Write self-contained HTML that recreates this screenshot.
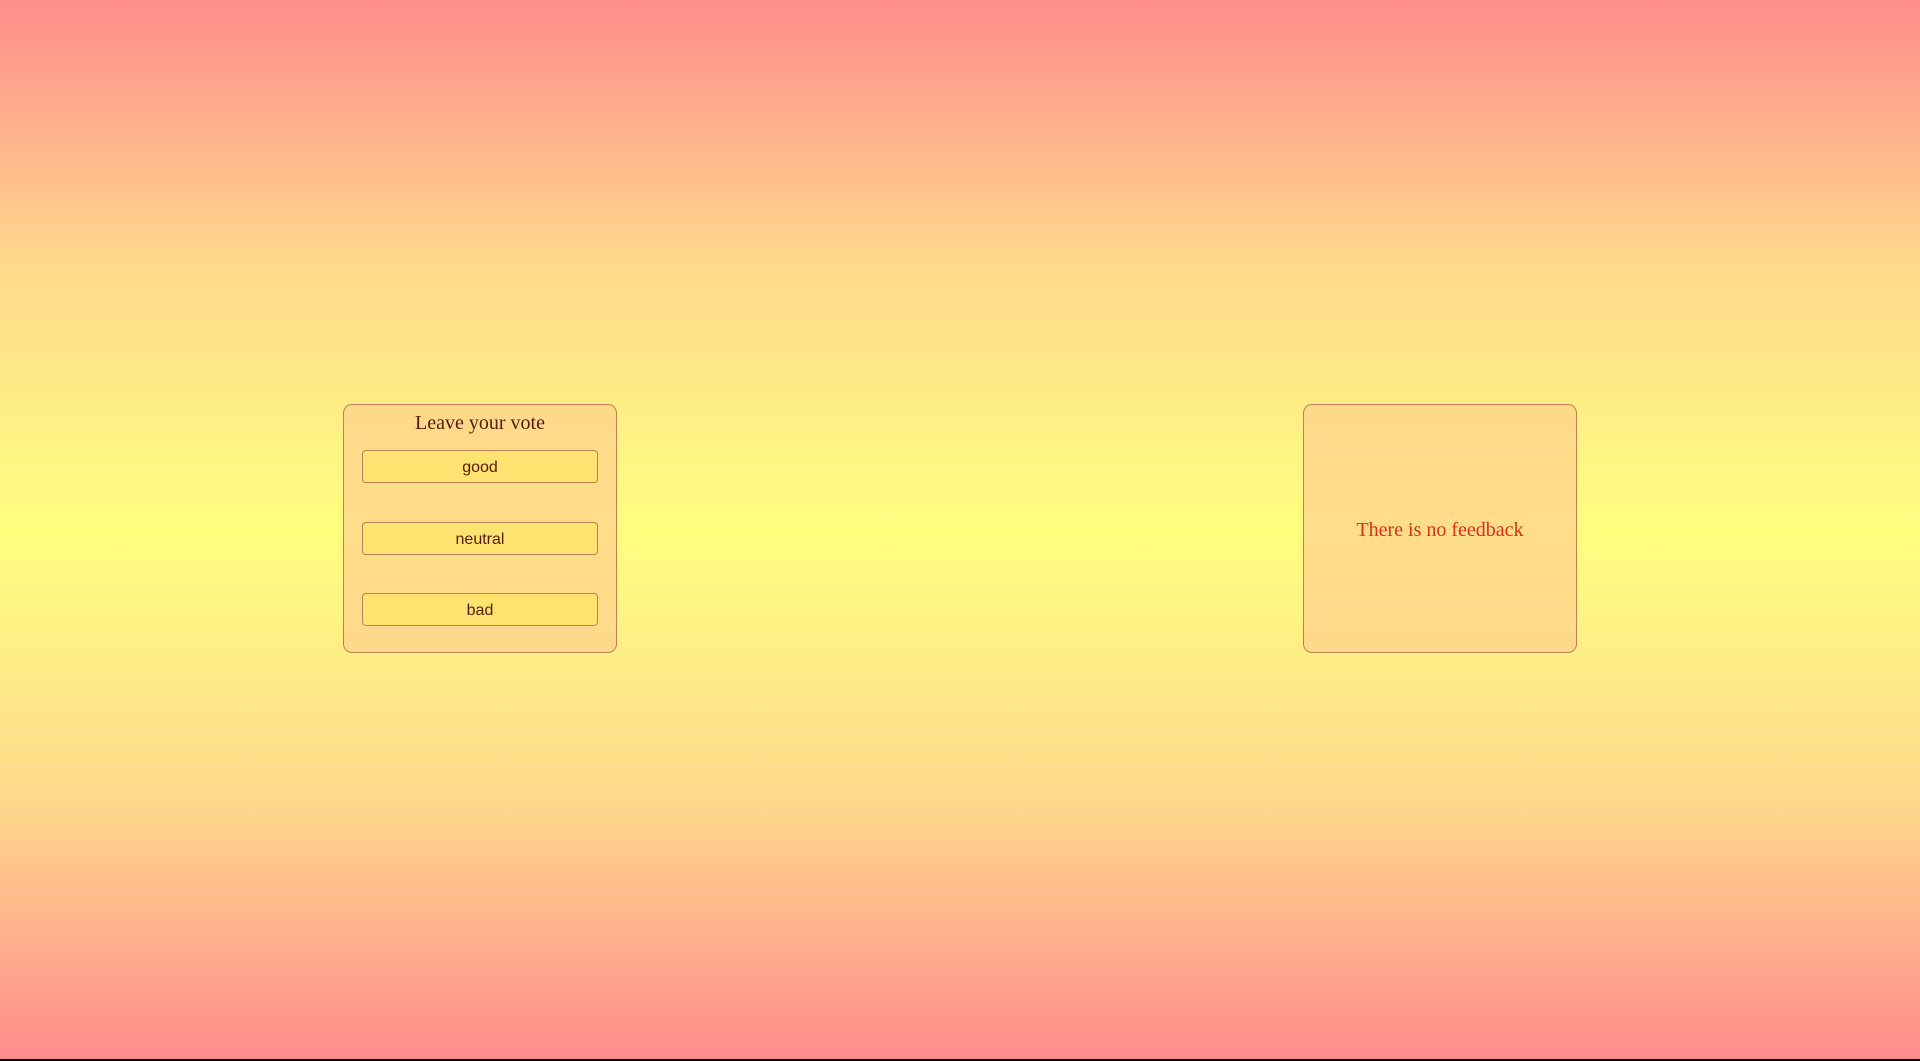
<!DOCTYPE html>
<html><head><meta charset="utf-8"><style>
html,body{margin:0;padding:0;width:1920px;height:1061px;overflow:hidden}
body{background:linear-gradient(to bottom,#ff8c8c 0%,#ffd98c 25%,#ffff80 50%,#ffd98c 75%,#ff8c8c 99.8%,#000 99.8%);position:relative;font-family:"Liberation Serif",serif}
.box{position:absolute;top:404px;width:272px;height:247px;border:1px solid #c08050;border-radius:9px;background:rgba(255,210,140,0.75);box-sizing:content-box}
.l{left:343px}.r{left:1303px}
.t{position:absolute;top:7px;left:0;right:0;text-align:center;font-size:20px;color:#5a1a0a}
.b{position:absolute;left:18px;width:234px;height:31px;border:1px solid #c08050;border-radius:4px;background:#ffe370;font-family:"Liberation Sans",sans-serif;font-size:16px;color:#5a1a0a;text-align:center;line-height:33px}
.f{position:absolute;top:2px;left:0;right:0;height:247px;line-height:247px;text-align:center;font-size:20px;color:#d8301c}
</style></head><body>
<div class="box l"><div class="t">Leave your vote</div>
<div class="b" style="top:45px">good</div>
<div class="b" style="top:117px">neutral</div>
<div class="b" style="top:188px">bad</div></div>
<div class="box r"><div class="f">There is no feedback</div></div>
</body></html>
